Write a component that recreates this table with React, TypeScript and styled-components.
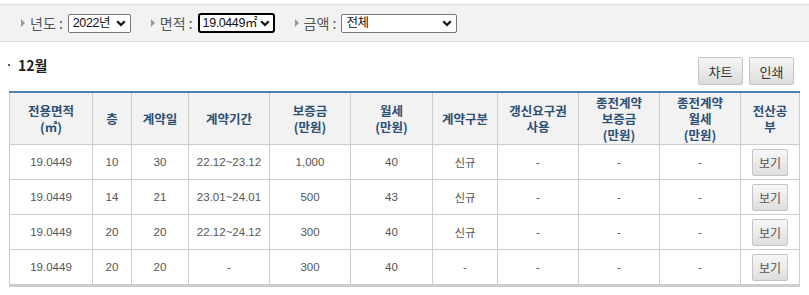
import styled, { createGlobalStyle } from 'styled-components';

const GlobalStyle = createGlobalStyle`
  body {
    margin: 0;
    background: #fff;
    font-family: "Noto Sans CJK KR", "Liberation Sans", sans-serif;
  }
`;

const columns = [83, 39, 57, 81, 81, 82, 65, 81, 81, 81, 59];

const headers = [
  ['전용면적', '(㎡)'],
  ['층'],
  ['계약일'],
  ['계약기간'],
  ['보증금', '(만원)'],
  ['월세', '(만원)'],
  ['계약구분'],
  ['갱신요구권', '사용'],
  ['종전계약', '보증금', '(만원)'],
  ['종전계약', '월세', '(만원)'],
  ['전산공', '부'],
];

const rows = [
  ['19.0449', '10', '30', '22.12~23.12', '1,000', '40', '신규', '-', '-', '-'],
  ['19.0449', '14', '21', '23.01~24.01', '500', '43', '신규', '-', '-', '-'],
  ['19.0449', '20', '20', '22.12~24.12', '300', '40', '신규', '-', '-', '-'],
  ['19.0449', '20', '20', '-', '300', '40', '-', '-', '-', '-'],
];

const Chevron = () => (
  <ChevronIcon width="10" height="7" viewBox="0 0 10 7">
    <path d="M1.2 1.2 L5 5 L8.8 1.2" fill="none" stroke="#111" strokeWidth="2.2" />
  </ChevronIcon>
);

export default function App() {
  return (
    <Page>
      <GlobalStyle />
      <FilterBar>
        <FilterGroup>
          <Arrow />
          <Label>년도 :</Label>
          <SelectWrap>
            <Select $w={63} defaultValue="2022">
              <option value="2022">2022년</option>
            </Select>
            <Chevron />
          </SelectWrap>
        </FilterGroup>
        <FilterGroup>
          <Arrow />
          <Label>면적 :</Label>
          <SelectWrap>
            <Select $w={77} $focused defaultValue="19">
              <option value="19">19.0449㎡</option>
            </Select>
            <Chevron />
          </SelectWrap>
        </FilterGroup>
        <FilterGroup>
          <Arrow />
          <Label>금액 :</Label>
          <SelectWrap>
            <Select $w={116} defaultValue="all">
              <option value="all">전체</option>
            </Select>
            <Chevron />
          </SelectWrap>
        </FilterGroup>
      </FilterBar>

      <Content>
        <TitleRow>
          <Title>
            <Bullet />
            12월
          </Title>
          <ButtonGroup>
            <ToolButton>차트</ToolButton>
            <ToolButton>인쇄</ToolButton>
          </ButtonGroup>
        </TitleRow>

        <Table>
          <colgroup>
            {columns.map((w, i) => (
              <col key={i} style={{ width: w }} />
            ))}
          </colgroup>
          <thead>
            <tr>
              {headers.map((lines, i) => (
                <Th key={i}>
                  {lines.map((l, j) => (
                    <HeadLine key={j}>{l}</HeadLine>
                  ))}
                </Th>
              ))}
            </tr>
          </thead>
          <tbody>
            {rows.map((row, i) => (
              <tr key={i}>
                {row.map((cell, j) => (
                  <Td key={j}>{cell}</Td>
                ))}
                <Td>
                  <ViewButton>보기</ViewButton>
                </Td>
              </tr>
            ))}
          </tbody>
        </Table>
      </Content>
    </Page>
  );
}

const Page = styled.div`
  padding-top: 4px;
`;

const FilterBar = styled.div`
  display: flex;
  align-items: center;
  height: 36px;
  padding-left: 21px;
  background: #f2f2f2;
  border-top: 1px solid #dcdcdc;
  border-bottom: 1px solid #dcdcdc;
`;

const FilterGroup = styled.div`
  display: flex;
  align-items: center;
  margin-right: 20px;
`;

const Arrow = styled.span`
  width: 0;
  height: 0;
  border-left: 4px solid #999;
  border-top: 4px solid transparent;
  border-bottom: 4px solid transparent;
  margin-right: 5px;
`;

const Label = styled.span`
  font-size: 14px;
  color: #555;
  margin-right: 5px;
  white-space: nowrap;
`;

const SelectWrap = styled.div`
  position: relative;
  display: flex;
  align-items: center;
`;

const Select = styled.select<{ $w: number; $focused?: boolean }>`
  appearance: none;
  box-sizing: border-box;
  width: ${(p) => p.$w}px;
  height: ${(p) => (p.$focused ? 20 : 19)}px;
  font-family: "Liberation Sans", "Noto Sans CJK KR", sans-serif;
  font-size: 12.5px;
  letter-spacing: -0.4px;
  color: #111;
  background: #fff;
  padding: 0 14px 0 ${(p) => (p.$focused ? 3 : 4)}px;
  border: ${(p) => (p.$focused ? '2px solid #000' : '1px solid #767676')};
  border-radius: ${(p) => (p.$focused ? 3 : 2)}px;
  outline: none;
`;

const ChevronIcon = styled.svg`
  position: absolute;
  right: 5px;
  top: 50%;
  margin-top: -3px;
  pointer-events: none;
`;

const Content = styled.div`
  padding: 0 10px 0 9px;
`;

const TitleRow = styled.div`
  display: flex;
  justify-content: space-between;
  align-items: flex-start;
  margin-top: 15px;
`;

const Title = styled.div`
  display: flex;
  align-items: center;
  margin-left: -1px;
  margin-top: -2px;
  font-size: 14px;
  font-weight: bold;
  color: #222;
`;

const Bullet = styled.span`
  width: 2px;
  height: 2px;
  background: #555;
  margin-right: 8px;
`;

const ButtonGroup = styled.div`
  display: flex;
  gap: 6px;
  padding-right: 5px;
`;

const ToolButton = styled.button`
  width: 45px;
  height: 28px;
  padding: 0;
  font-family: "Noto Sans CJK KR", sans-serif;
  font-size: 13px;
  color: #333;
  background: linear-gradient(#f6f6f6, #dcdcdc);
  border: 1px solid #c4c4c4;
  border-radius: 2px;
`;

const Table = styled.table`
  width: 790px;
  margin-top: 6px;
  border-collapse: collapse;
  table-layout: fixed;
  border-top: 2px solid #4a84b6;
  border-bottom: 3px solid #cccccc;
`;

const Th = styled.th`
  height: 51px;
  padding: 0;
  background: #f2f2f2;
  border-left: 1px solid #cccccc;
  border-right: 1px solid #cccccc;
  border-bottom: 1px solid #cccccc;
  font-size: 12.5px;
  font-weight: bold;
  color: #2c4f74;
  text-align: center;
  vertical-align: middle;
`;

const HeadLine = styled.div`
  line-height: 16px;
`;

const Td = styled.td`
  height: 34px;
  padding: 0;
  border: 1px solid #cccccc;
  font-family: "Liberation Sans", "Noto Sans CJK KR", sans-serif;
  font-size: 11.5px;
  color: #555;
  text-align: center;
  vertical-align: middle;
`;

const ViewButton = styled.button`
  width: 36px;
  height: 27px;
  padding: 0;
  font-family: "Noto Sans CJK KR", sans-serif;
  font-size: 12px;
  color: #555;
  background: linear-gradient(#f7f7f7, #dedede);
  border: 1px solid #c4c4c4;
  border-radius: 2px;
`;
